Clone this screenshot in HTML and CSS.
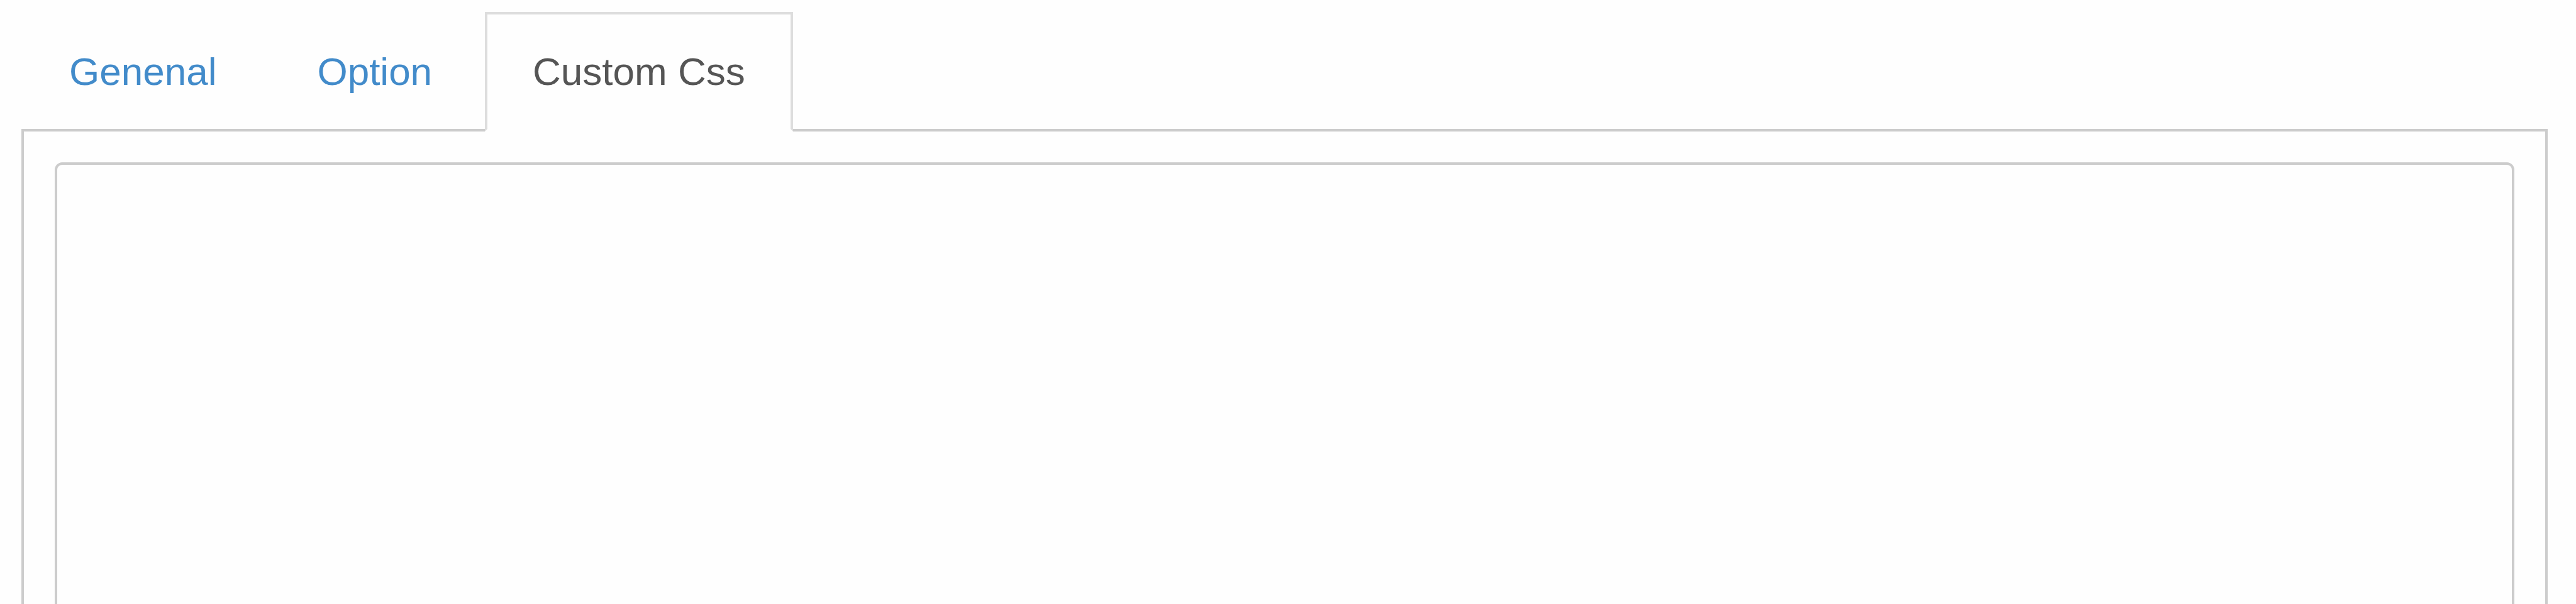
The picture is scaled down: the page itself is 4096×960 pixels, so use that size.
FILE: index.html
```html
<!DOCTYPE html>
<html lang="en">
<head>
<meta charset="utf-8">
<title>Custom Css</title>
<link rel="stylesheet" href="styles.css">
</head>
<body>
<main class="settings">
  <nav class="tabs" aria-label="Settings">
    <a class="tab" href="#general">Genenal</a>
    <a class="tab" href="#option">Option</a>
    <a class="tab tab-active" href="#custom-css" aria-current="page">Custom Css</a>
  </nav>
  <section class="panel" id="custom-css">
    <textarea class="editor" rows="20" aria-label="Custom Css" spellcheck="false"></textarea>
  </section>
</main>
</body>
</html>
```

FILE: styles.css
```css
* {
  box-sizing: border-box;
}

body {
  margin: 0;
  height: 100vh;
  overflow: hidden;
  background: #fefefe;
  font-family: "Liberation Sans", Arial, sans-serif;
  font-size: 62px;
  line-height: 88px;
}

.settings {
  padding: 19px 45px 0 34px;
}

.tabs {
  display: flex;
  gap: 8px;
}

.tab {
  margin-bottom: -4px;
  padding: 47px 72px;
  border: 4px solid transparent;
  color: #428bca;
  text-decoration: none;
}

.tab-active {
  z-index: 1;
  border-color: #ddd #ddd #fefefe;
  background: #fefefe;
  color: #555;
}

.panel {
  padding: 49px;
  border: 4px solid #ccc;
}

.editor {
  display: block;
  width: 100%;
  padding: 24px 48px;
  border: 4px solid #ccc;
  border-radius: 12px;
  outline: 0;
  background: #fefefe;
  color: #555;
  font: inherit;
  resize: none;
}
```
